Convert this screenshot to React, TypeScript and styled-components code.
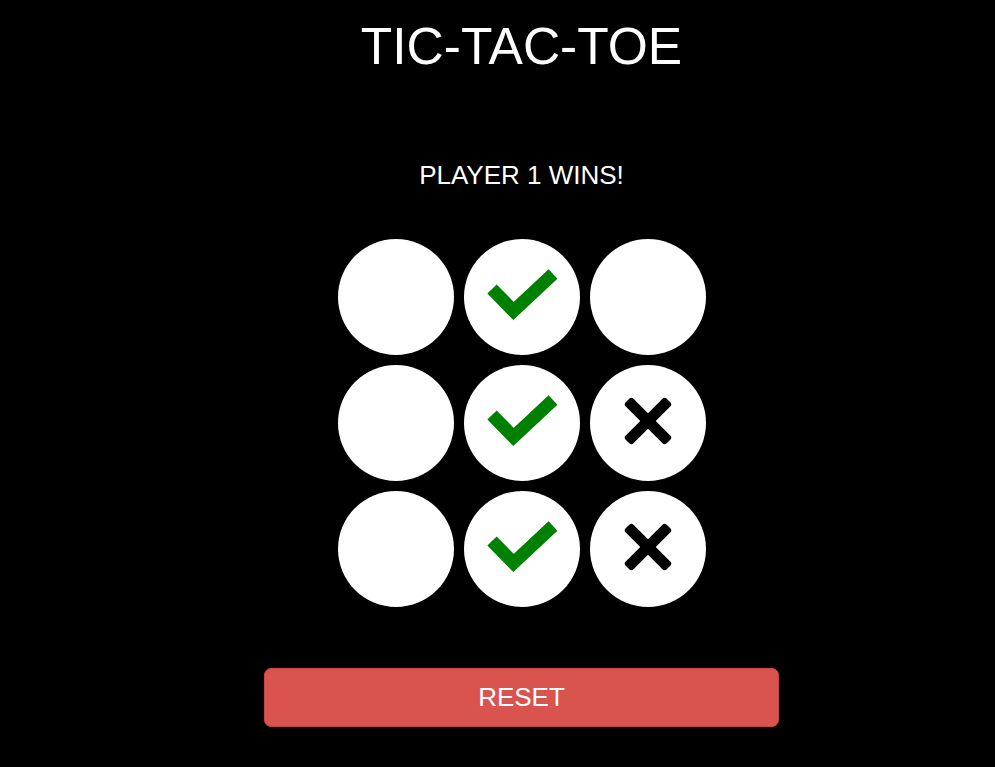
import React from "react";
import styled, { createGlobalStyle } from "styled-components";

const GlobalStyle = createGlobalStyle`
  html, body {
    margin: 0;
    padding: 0;
    background: #000;
  }
  body {
    font-family: "Liberation Sans", Arial, sans-serif;
    color: #fff;
  }
`;

const Page = styled.div`
  display: flex;
  flex-direction: column;
  align-items: center;
  padding-left: 48px;
  min-height: 767px;
  box-sizing: border-box;
`;

const Title = styled.h1`
  margin: 16px 0 0;
  font-size: 51.5px;
  font-weight: 400;
  line-height: 60px;
`;

const Status = styled.div`
  margin-top: 84px;
  font-size: 26px;
  line-height: 30px;
`;

const Board = styled.div`
  margin-top: 49px;
  display: grid;
  grid-template-columns: repeat(3, 116px);
  grid-auto-rows: 116px;
  gap: 10px;
`;

const Cell = styled.div`
  width: 116px;
  height: 116px;
  border-radius: 50%;
  background: #fff;
  display: flex;
  align-items: center;
  justify-content: center;
`;

const ResetButton = styled.button`
  margin-top: 61px;
  width: 515px;
  height: 59px;
  border: 1px solid #c9433f;
  border-radius: 7px;
  background: #d9534f;
  color: #fff;
  font-family: "Liberation Sans", Arial, sans-serif;
  font-size: 26px;
  cursor: pointer;
`;

const Check = () => (
  <svg width="116" height="116" viewBox="0 0 116 116">
    <polyline
      points="28,50 49.5,72 89,35"
      fill="none"
      stroke="#008000"
      strokeWidth="13"
      strokeLinejoin="miter"
      strokeLinecap="butt"
    />
  </svg>
);

const Cross = () => (
  <svg width="116" height="116" viewBox="0 0 116 116">
    <g fill="#000">
      <rect x="29" y="50.5" width="58" height="11" rx="3" transform="rotate(45 58 56)" />
      <rect x="29" y="50.5" width="58" height="11" rx="3" transform="rotate(-45 58 56)" />
    </g>
  </svg>
);

type Mark = "" | "check" | "x";

const board: Mark[] = ["", "check", "", "", "check", "x", "", "check", "x"];

export default function App() {
  return (
    <>
      <GlobalStyle />
      <Page>
        <Title>TIC-TAC-TOE</Title>
        <Status>PLAYER 1 WINS!</Status>
        <Board>
          {board.map((m, i) => (
            <Cell key={i}>
              {m === "check" && <Check />}
              {m === "x" && <Cross />}
            </Cell>
          ))}
        </Board>
        <ResetButton>RESET</ResetButton>
      </Page>
    </>
  );
}
